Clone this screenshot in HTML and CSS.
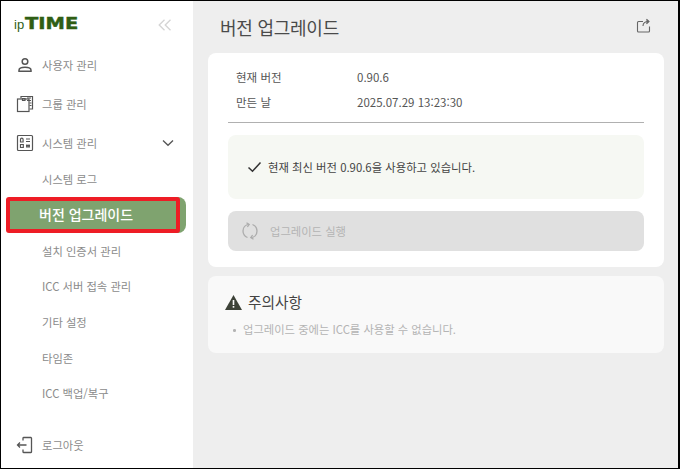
FILE: index.html
```html
<!DOCTYPE html>
<html lang="ko">
<head>
<meta charset="utf-8">
<title>버전 업그레이드</title>
<link rel="stylesheet" href="styles.css">
</head>
<body>
<div class="app">
  <aside class="sidebar">
    <div class="brand">
      <div class="logo"><span class="logo-ip">ip</span><span class="logo-time">TIME</span></div>
      <svg class="collapse" width="14" height="12" viewBox="0 0 14 12" fill="none" stroke="#d4d4d4" stroke-width="1.3"><path d="M6.5 .8 1.2 6l5.300 5.200M12.500 .8 7.200 6l5.300 5.200"/></svg>
    </div>
    <nav class="menu">
      <a class="item">
        <svg class="ico" width="18" height="18" viewBox="0 0 18 18" fill="none" stroke="#555" stroke-width="1.500"><circle cx="9" cy="5.500" r="2.800"/><path d="M3 15.200v-1c0-1.800 2-2.900 6-2.900s6 1.100 6 2.900v1z"/></svg>
        <span>사용자 관리</span>
      </a>
      <a class="item">
        <svg class="ico" width="18" height="18" viewBox="0 0 18 18" fill="none" stroke="#555" stroke-width="1.200"><path d="M5 3.500v-2h11.500v12.500h-3"/><rect x="1.500" y="4" width="11.500" height="12.500"/><path d="M6.500 3.500h2.500v2h-2.500zM11 3h4M11 5.500h4M13.500 8h2M13.500 10.500h2"/></svg>
        <span>그룹 관리</span>
      </a>
      <a class="item">
        <svg class="ico" width="18" height="18" viewBox="0 0 18 18" fill="none" stroke="#555" stroke-width="1.200"><rect x="1.500" y="1.500" width="15" height="15" rx="1"/><path d="M4.500 8v-2.500a1.300 1.300 0 0 1 2.600 0v2.500zM4.500 10.500h2.800v3h-2.800zM10 5h4M10 7.500h4M10.800 10.500v3M13 10.500v3M10 11.300h4M10 12.800h4"/></svg>
        <span class="grow">시스템 관리</span>
        <svg class="chev" width="12" height="8" viewBox="0 0 12 8" fill="none" stroke="#555" stroke-width="1.300"><path d="M1 1.500 6 6.300l5-4.800"/></svg>
      </a>
      <div class="submenu">
        <a class="sub">시스템 로그</a>
        <a class="sub active"><span class="mark"></span>버전 업그레이드</a>
        <a class="sub">설치 인증서 관리</a>
        <a class="sub">ICC 서버 접속 관리</a>
        <a class="sub">기타 설정</a>
        <a class="sub">타임존</a>
        <a class="sub">ICC 백업/복구</a>
      </div>
    </nav>
    <a class="item logout">
      <svg class="ico" width="18" height="18" viewBox="0 0 18 18" fill="none" stroke="#555" stroke-width="1.300"><path d="M7 4.500v-2.500a.8.800 0 0 1 .8-.5h7.200a.8.800 0 0 1 .5.800v13.400a.8.800 0 0 1-.5.800h-7.200a.8.800 0 0 1-.8-.5v-2.500M10.500 9h-9M4 6.500 1.500 9l2.500 2.500"/></svg>
      <span>로그아웃</span>
    </a>
  </aside>
  <main class="main">
    <header class="head">
      <h1>버전 업그레이드</h1>
      <svg class="share" width="16" height="16" viewBox="0 0 16 16" fill="none" stroke="#666" stroke-width="1.100"><path d="M7 3.500h-4.500a1 1 0 0 0-1 1v8.500a1 1 0 0 0 1 1h10a1 1 0 0 0 1-1v-4.500"/><path d="M7 8c0-3 2-4.500 5.500-4.500"/><path d="M10.500 1.200 13 3.500l-2.500 2.300" fill="#666"/></svg>
    </header>
    <section class="card">
      <dl class="info">
        <div class="row"><dt>현재 버전</dt><dd>0.90.6</dd></div>
        <div class="row"><dt>만든 날</dt><dd>2025.07.29 13:23:30</dd></div>
      </dl>
      <div class="status">
        <svg width="15" height="12" viewBox="0 0 15 12" fill="none" stroke="#333" stroke-width="1.500"><path d="M1.500 6.500 5.500 10.300 13.500 1.500"/></svg>
        <span>현재 최신 버전 0.90.6을 사용하고 있습니다.</span>
      </div>
      <button class="upgrade" type="button" disabled>
        <svg width="18" height="18" viewBox="0 0 18 18" fill="none" stroke="#adadad" stroke-width="1.300"><path d="M8 2.300C4.500 2.500 2 5.300 2 9c0 3 1.800 5.400 4.500 6.500"/><path d="M10 15.700c3.500-.2 6-3 6-6.700 0-3-1.800-5.400-4.500-6.500"/><path d="M5.500 .8 8.200 2.400 6.400 5M12.500 17.200 9.800 15.600l1.800-2.600"/></svg>
        <span>업그레이드 실행</span>
      </button>
    </section>
    <section class="notice">
      <h2>
        <svg width="17" height="15" viewBox="0 0 17 15"><path d="M8.500 0 17 15H0z" fill="#3d4238"/><rect x="7.700" y="5" width="1.600" height="5" fill="#fafafa"/><rect x="7.700" y="11" width="1.600" height="1.700" fill="#fafafa"/></svg>
        <span>주의사항</span>
      </h2>
      <ul><li>업그레이드 중에는 ICC를 사용할 수 없습니다.</li></ul>
    </section>
  </main>
</div>
</body>
</html>
```

FILE: styles.css
```css
* { box-sizing: border-box; }
html, body { margin: 0; height: 100%; }
body {
  font-family: "Noto Sans CJK KR", "Noto Sans", sans-serif;
  background: #000;
  overflow: hidden;
}
.app {
  display: flex;
  height: 469px;
  width: 680px;
  border: solid #000;
  border-width: 1px 2px 1px 1px;
  background: #eee;
}
.sidebar {
  width: 192px;
  flex: none;
  background: #fff;
  display: flex;
  flex-direction: column;
}
.brand {
  height: 44px;
  padding: 3px 22px 0 13px;
  display: flex;
  align-items: center;
  justify-content: space-between;
}
.logo { display: flex; align-items: baseline; color: #2f5e14; line-height: 1; }
.logo-ip { font-family: "Liberation Sans", sans-serif; font-size: 13px; letter-spacing: 0; margin-right: 1px; }
.logo-time {
  display: inline-block;
  width: 52px;
  font-family: "DejaVu Sans", sans-serif;
  font-size: 15px;
  font-weight: 700;
  transform: scaleX(1.3);
  transform-origin: left center;
  -webkit-text-stroke: .4px #2f5e14;
  white-space: nowrap;
}
.collapse { margin-right: -1px; }
.menu { flex: 1; display: flex; flex-direction: column; }
.item {
  height: 39px;
  padding: 0 19px 0 15px;
  display: flex;
  align-items: center;
  gap: 8px;
  font-size: 11.300px;
  color: #8b8b8b;
}
.grow { flex: 1; }
.ico { flex: none; }
.submenu { display: flex; flex-direction: column; margin-top: -1px; }
.sub {
  height: 35.700px;
  padding-left: 41px;
  display: flex;
  align-items: center;
  font-size: 11.300px;
  color: #8b8b8b;
}
.sub.active {
  position: relative;
  height: 36px;
  margin: 0 7px 0 5px;
  padding: 0 0 2px 33px;
  border-radius: 8px;
  background: #7fa36f;
  color: #fff;
  font-size: 14px;
  font-weight: 500;
}
.mark {
  position: absolute;
  left: 0;
  top: 0;
  width: 174px;
  height: 36px;
  border: 4px solid #ee1c25;
  border-radius: 3px;
}
.logout { height: 36px; margin-bottom: 5px; }
.main { flex: 1; min-width: 0; padding: 0 14px 0 15px; }
.head {
  height: 52px;
  display: flex;
  align-items: center;
  justify-content: space-between;
  padding: 0 12px 0 12px;
}
.share { margin-bottom: 3px; }
h1 { margin: 0; font-size: 18px; font-weight: 400; color: #4a4a4a; letter-spacing: -.25px; }
.card {
  height: 214px;
  padding: 12px 20px 0;
  background: #fff;
  border-radius: 8px;
}
.info { margin: 0; height: 58px; border-bottom: 1px solid #b0b0b0; padding-left: 8px; }
.row { display: flex; height: 24.500px; align-items: center; font-size: 11.500px; color: #555; }
dt { width: 121px; }
dd { margin: 0; }
.status {
  margin-top: 12px;
  height: 64px;
  padding-left: 19px;
  display: flex;
  align-items: center;
  gap: 6px;
  border-radius: 8px;
  background: #f6f8f3;
  font-size: 11.350px;
  color: #444;
}
.upgrade {
  margin-top: 12px;
  width: 100%;
  height: 40px;
  padding: 0 0 0 13px;
  display: flex;
  align-items: center;
  gap: 11px;
  border: 0;
  border-radius: 8px;
  background: #e0e0e0;
  font: inherit;
  font-size: 11.300px;
  color: #b4b4b4;
}
.notice {
  margin-top: 9px;
  height: 77px;
  padding: 14px 17px;
  background: #f9f9f9;
  border-radius: 8px;
}
h2 {
  margin: 0;
  display: flex;
  align-items: center;
  gap: 6px;
  font-size: 14.700px;
  font-weight: 400;
  line-height: 24px;
  color: #444;
}
ul { margin: 7px 0 0; padding: 0 0 0 18px; font-size: 11.300px; color: #b4b4b4; list-style: none; }
li { position: relative; }
li::before {
  content: "";
  position: absolute;
  left: -10px;
  top: 8px;
  width: 2.500px;
  height: 2.500px;
  border-radius: 50%;
  background: #b4b4b4;
}
```
